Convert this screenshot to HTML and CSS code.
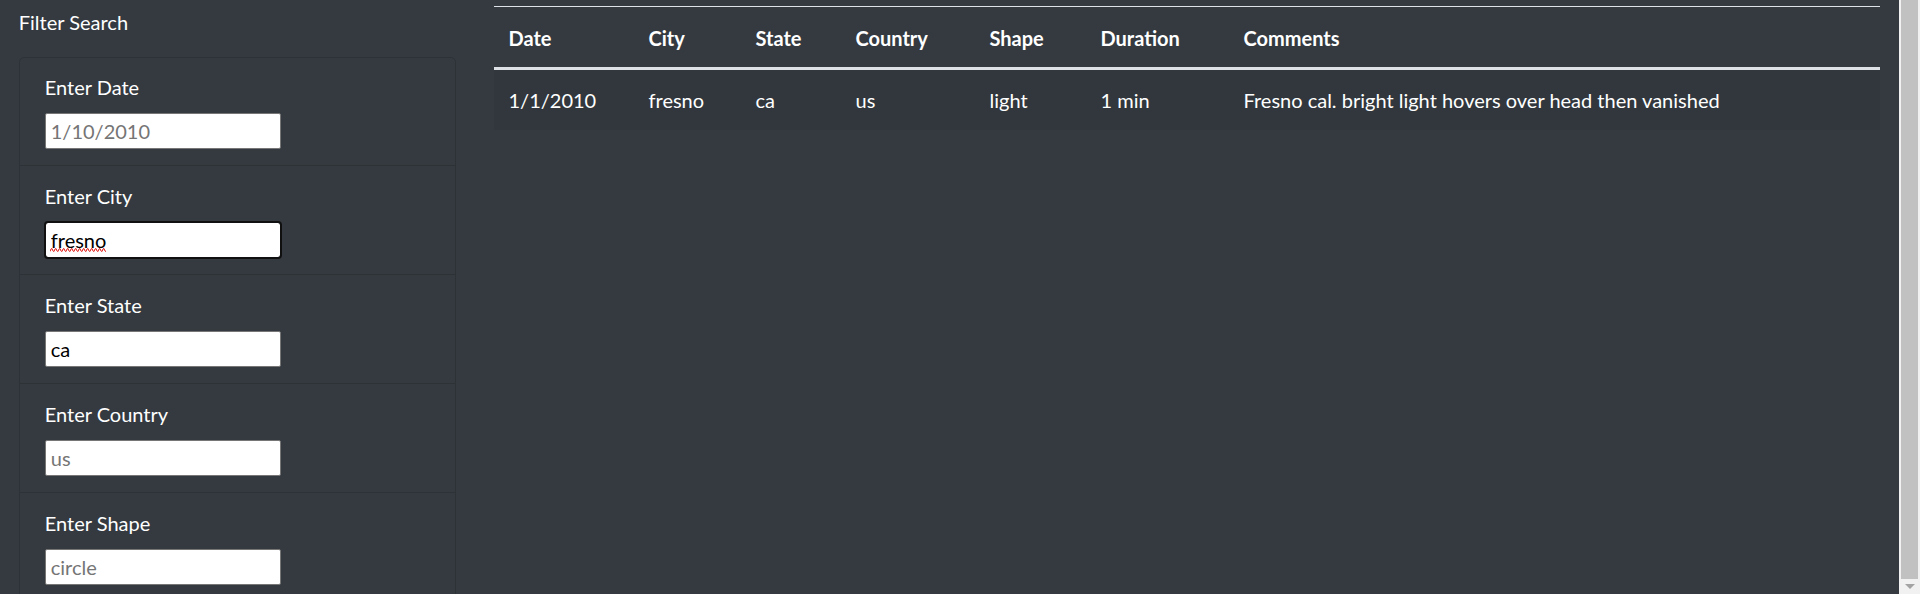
FILE: index.html
```html
<!DOCTYPE html>
<html lang="en">
<head>
<meta charset="utf-8">
<title>UFO Sightings</title>
<link rel="stylesheet" href="styles.css">
</head>
<body>
  <div class="page">
    <div class="layout">
      <aside class="sidebar">
        <div class="sidebar-title">Filter Search</div>
        <ul class="filters">
          <li class="filter">
            <label class="filter-label" for="datetime">Enter Date</label>
            <input class="filter-input" id="datetime" type="text" placeholder="1/10/2010">
          </li>
          <li class="filter">
            <label class="filter-label" for="city">Enter City</label>
            <div class="input-wrap">
              <input class="filter-input is-focus" id="city" type="text" value="fresno">
              <svg class="spell" width="56" height="4" viewBox="0 0 56 4" aria-hidden="true">
                <defs>
                  <pattern id="squiggle" width="4" height="4" patternUnits="userSpaceOnUse">
                    <polyline points="0,3.5 1,1 2,0.5 3,3 4,3.5" fill="none" stroke="#e0201c" stroke-width="1"/>
                  </pattern>
                </defs>
                <rect x="0" y="0" width="56" height="4" fill="url(#squiggle)"/>
              </svg>
            </div>
          </li>
          <li class="filter">
            <label class="filter-label" for="state">Enter State</label>
            <input class="filter-input" id="state" type="text" value="ca">
          </li>
          <li class="filter">
            <label class="filter-label" for="country">Enter Country</label>
            <input class="filter-input" id="country" type="text" placeholder="us">
          </li>
          <li class="filter">
            <label class="filter-label" for="shape">Enter Shape</label>
            <input class="filter-input" id="shape" type="text" placeholder="circle">
          </li>
        </ul>
      </aside>
      <main class="content">
        <table class="sightings">
          <colgroup>
            <col class="c-date"><col class="c-city"><col class="c-state"><col class="c-country"><col class="c-shape"><col class="c-duration"><col>
          </colgroup>
          <thead>
            <tr>
              <th>Date</th><th>City</th><th>State</th><th>Country</th><th>Shape</th><th>Duration</th><th>Comments</th>
            </tr>
          </thead>
          <tbody>
            <tr>
              <td>1/1/2010</td><td>fresno</td><td>ca</td><td>us</td><td>light</td><td>1 min</td><td>Fresno cal. bright light hovers over head then vanished</td>
            </tr>
          </tbody>
        </table>
      </main>
    </div>
  </div>
  <div class="scrollbar">
    <div class="scroll-thumb"></div>
    <div class="scroll-arrow"></div>
  </div>
</body>
</html>
```
FILE: styles.css
```css
* { box-sizing: border-box; }

html, body {
  margin: 0;
  height: 100%;
}

body {
  display: flex;
  overflow: hidden;
  background: #343a40;
  color: #ffffff;
  font-family: Lato, "Open Sans", sans-serif;
  font-size: 20px;
  line-height: 30px;
}

.page {
  flex: 1 1 auto;
  min-width: 0;
}

.layout {
  display: flex;
  padding-top: 6px;
}

.sidebar {
  flex: 0 0 25%;
  padding: 0 18.75px;
}

.content {
  flex: 0 0 75%;
  padding: 0 18.75px;
}

.sidebar-title {
  line-height: 30px;
  margin-top: 1px;
  margin-bottom: 20px;
}

.filters {
  list-style: none;
  margin: 0;
  padding: 0;
  border: 1px solid rgba(0, 0, 0, 0.13);
  border-radius: 5px;
}

.filter {
  padding: 15px 25px 16px;
  border-top: 1px solid rgba(0, 0, 0, 0.13);
}

.filter:first-child {
  border-top: 0;
  padding-top: 14px;
}

.filter-label {
  display: block;
  line-height: 30px;
  margin-bottom: 11px;
}

.input-wrap {
  position: relative;
  width: 236px;
}

.filter-input {
  display: block;
  width: 236px;
  height: 36px;
  margin: 0;
  padding: 0 5px;
  border: 1px solid #767676;
  border-radius: 2px;
  background: #ffffff;
  color: #000000;
  font-family: inherit;
  font-size: 20px;
}

.filter-input::placeholder {
  color: #757575;
}

.filter-input.is-focus {
  outline: 2px solid #101010;
  outline-offset: -1px;
  border-radius: 3px;
}

.spell {
  position: absolute;
  left: 5px;
  top: 26px;
  display: block;
  pointer-events: none;
}

.sightings {
  width: 100%;
  table-layout: fixed;
  border-collapse: collapse;
  color: #ffffff;
}

.c-date { width: 140px; }
.c-city { width: 107px; }
.c-state { width: 100px; }
.c-country { width: 134px; }
.c-shape { width: 111px; }
.c-duration { width: 143px; }

.sightings th,
.sightings td {
  padding: 15px;
  text-align: left;
  vertical-align: top;
  white-space: nowrap;
}

.sightings thead th {
  font-weight: 700;
  padding-top: 16px;
  padding-bottom: 14px;
  border-top: 1px solid #dee2e6;
  border-bottom: 3px solid #dee2e6;
}

.sightings tbody tr {
  background: rgba(0, 0, 0, 0.05);
}

.scrollbar {
  flex: 0 0 21px;
  display: flex;
  flex-direction: column;
  background: #f1f1f1;
  padding: 0 2px;
}

.scroll-thumb {
  flex: 0 0 579px;
  background: #c1c1c1;
}

.scroll-arrow {
  flex: 1 1 auto;
  display: flex;
  justify-content: center;
  align-items: center;
}

.scroll-arrow::before {
  content: "";
  width: 0;
  height: 0;
  border-left: 5px solid transparent;
  border-right: 5px solid transparent;
  border-top: 5px solid #a3a3a3;
}
```
